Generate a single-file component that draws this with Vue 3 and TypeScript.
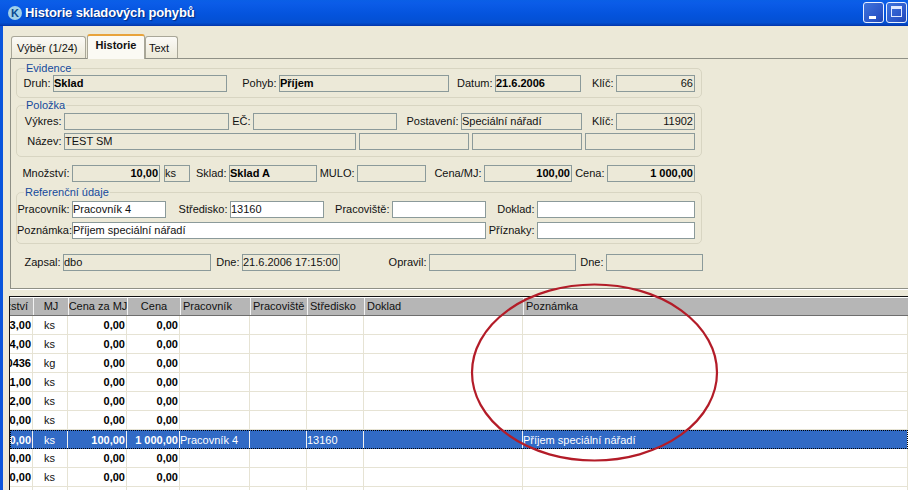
<script setup lang="ts">
type F = { l?: string; lw: number; w: number; v?: string; b?: boolean; r?: boolean };
const evidence: F[] = [
  { l: 'Druh:', lw: 36, w: 174, v: 'Sklad', b: true },
  { l: 'Pohyb:', lw: 52, w: 170, v: 'Příjem', b: true },
  { l: 'Datum:', lw: 46, w: 86, v: '21.6.2006', b: true },
  { l: 'Klíč:', lw: 35, w: 79, v: '66', r: true },
];
const pol1: F[] = [
  { l: 'Výkres:', lw: 47, w: 165 },
  { l: 'EČ:', lw: 24, w: 144 },
  { l: 'Postavení:', lw: 64, w: 121, v: 'Speciální nářadí' },
  { l: 'Klíč:', lw: 34, w: 79, v: '11902', r: true },
];
const pol2: F[] = [
  { l: 'Název:', lw: 47, w: 292, v: 'TEST SM' },
  { lw: 3, w: 110 },
  { lw: 3, w: 110 },
  { lw: 3, w: 110 },
];
const free: F[] = [
  { l: 'Množství:', lw: 55, w: 88, v: '10,00', b: true, r: true },
  { lw: 4, w: 26, v: 'ks' },
  { l: 'Sklad:', lw: 39, w: 88, v: 'Sklad A', b: true },
  { l: 'MULO:', lw: 40, w: 69 },
  { l: 'Cena/MJ:', lw: 58, w: 88, v: '100,00', b: true, r: true },
  { l: 'Cena:', lw: 35, w: 88, v: '1 000,00', b: true, r: true },
];
const ref1: F[] = [
  { l: 'Pracovník:', lw: 55, w: 94, v: 'Pracovník 4' },
  { l: 'Středisko:', lw: 64, w: 94, v: '13160' },
  { l: 'Pracoviště:', lw: 68, w: 94 },
  { l: 'Doklad:', lw: 51, w: 158 },
];
const ref2: F[] = [
  { l: 'Poznámka:', lw: 55, w: 414, v: 'Příjem speciální nářadí' },
  { l: 'Příznaky:', lw: 51, w: 158 },
];
const audit: F[] = [
  { l: 'Zapsal:', lw: 46, w: 148, v: 'dbo' },
  { l: 'Dne:', lw: 31, w: 98, v: '21.6.2006 17:15:00' },
  { l: 'Opravil:', lw: 89, w: 147 },
  { l: 'Dne:', lw: 30, w: 97 },
];
const headers = ['Množství', 'MJ', 'Cena za MJ', 'Cena', 'Pracovník', 'Pracoviště', 'Středisko', 'Doklad', 'Poznámka'];
const aligns = ['h-end', 'h-center', 'h-center', 'h-center', 'h-start', 'h-start', 'h-start', 'h-start', 'h-start'];
type R = { q: string; u: string; p?: string; c?: string; worker?: string; centre?: string; note?: string; sel?: boolean };
const rows: R[] = [
  { q: '13,00', u: 'ks' }, { q: '24,00', u: 'ks' }, { q: '0,0436', u: 'kg' }, { q: '11,00', u: 'ks' },
  { q: '12,00', u: 'ks' }, { q: '10,00', u: 'ks' },
  { q: '10,00', u: 'ks', p: '100,00', c: '1 000,00', worker: 'Pracovník 4', centre: '13160', note: 'Příjem speciální nářadí', sel: true },
  { q: '10,00', u: 'ks' }, { q: '10,00', u: 'ks' }, { q: '10,00', u: 'ks' },
];
</script>

<template>
  <div class="win">
    <header class="title">
      <span class="logo">K</span>
      <span class="title-text">Historie skladových pohybů</span>
      <span class="btn"><i class="min"></i></span>
      <span class="btn"><i class="max"></i></span>
    </header>
    <main class="body">
      <nav class="tabs">
        <span class="tab">Výběr (1/24)</span>
        <span class="tab active">Historie</span>
        <span class="tab">Text</span>
      </nav>
      <section class="panel">
        <div class="group g-ev">
          <span class="legend">Evidence</span>
          <div class="row">
            <template v-for="(f, i) in evidence" :key="i">
              <label class="lab" :style="{ width: f.lw + 'px' }">{{ f.l }}</label>
              <span class="box" :class="{ b: f.b, r: f.r }" :style="{ width: f.w + 'px' }">{{ f.v }}</span>
            </template>
          </div>
        </div>
        <div class="group g-pol">
          <span class="legend">Položka</span>
          <div class="row">
            <template v-for="(f, i) in pol1" :key="i">
              <label class="lab" :style="{ width: f.lw + 'px' }">{{ f.l }}</label>
              <span class="box" :class="{ r: f.r }" :style="{ width: f.w + 'px' }">{{ f.v }}</span>
            </template>
          </div>
          <div class="row gap3">
            <template v-for="(f, i) in pol2" :key="i">
              <label class="lab" :style="{ width: f.lw + 'px' }">{{ f.l }}</label>
              <span class="box" :style="{ width: f.w + 'px' }">{{ f.v }}</span>
            </template>
          </div>
        </div>
        <div class="row loose free">
          <template v-for="(f, i) in free" :key="i">
            <label class="lab" :style="{ width: f.lw + 'px' }">{{ f.l }}</label>
            <span class="box" :class="{ b: f.b, r: f.r }" :style="{ width: f.w + 'px' }">{{ f.v }}</span>
          </template>
        </div>
        <div class="group g-ref">
          <span class="legend leg-ref">Referenční údaje</span>
          <div class="row">
            <template v-for="(f, i) in ref1" :key="i">
              <label class="lab" :style="{ width: f.lw + 'px' }">{{ f.l }}</label>
              <span class="box white" :style="{ width: f.w + 'px' }">{{ f.v }}</span>
            </template>
          </div>
          <div class="row gap4">
            <template v-for="(f, i) in ref2" :key="i">
              <label class="lab" :style="{ width: f.lw + 'px' }">{{ f.l }}</label>
              <span class="box white" :style="{ width: f.w + 'px' }">{{ f.v }}</span>
            </template>
          </div>
        </div>
        <div class="row loose audit">
          <template v-for="(f, i) in audit" :key="i">
            <label class="lab" :style="{ width: f.lw + 'px' }">{{ f.l }}</label>
            <span class="box" :style="{ width: f.w + 'px' }">{{ f.v }}</span>
          </template>
        </div>
      </section>
      <section class="table">
        <div class="thead">
          <div v-for="(h, i) in headers" :key="h" class="th" :class="aligns[i]"><span>{{ h }}</span></div>
        </div>
        <div v-for="(r, i) in rows" :key="i" class="tr" :class="{ sel: r.sel }">
          <div class="td n end">{{ r.q }}</div>
          <div class="td center">{{ r.u }}</div>
          <div class="td n end">{{ r.p ?? '0,00' }}</div>
          <div class="td n end">{{ r.c ?? '0,00' }}</div>
          <div class="td">{{ r.worker }}</div>
          <div class="td"></div>
          <div class="td">{{ r.centre }}</div>
          <div class="td"></div>
          <div class="td">{{ r.note }}</div>
        </div>
      </section>
    </main>
    <svg class="ring" width="908" height="490" viewBox="0 0 908 490" aria-hidden="true">
      <ellipse cx="594.5" cy="372.5" rx="122.5" ry="88" fill="none" stroke="#b31c28" stroke-width="2.2" />
    </svg>
  </div>
</template>

<style scoped>
.win {
  position: relative;
  width: 908px;
  height: 490px;
  overflow: hidden;
  background: #ece9d8;
  font: 11px "Liberation Sans", Arial, sans-serif;
  color: #111;
}
.title {
  height: 26px;
  box-sizing: border-box;
  display: flex;
  align-items: center;
  padding: 0 1px 0 8px;
  background: linear-gradient(#0a5fe6 0, #0b5ce8 12%, #0453dc 60%, #0450d2 90%, #0340b8 100%);
  border-bottom: 1px solid #0338b0;
}
.logo {
  width: 14px;
  height: 14px;
  border-radius: 50%;
  background: #9fd0ea;
  color: #0a4a90;
  font: bold 11px/14px "Liberation Sans", sans-serif;
  text-align: center;
}
.title-text {
  margin-left: 3px;
  flex: 1;
  color: #fff;
  font: bold 13px "Liberation Sans", sans-serif;
  letter-spacing: -0.15px;
  text-shadow: 1px 1px 1px #022a80;
}
.btn {
  width: 21px;
  height: 21px;
  box-sizing: border-box;
  margin-left: 2px;
  border: 1px solid #e8f0ff;
  border-radius: 3px;
  background: linear-gradient(135deg, #3f74dc, #2a55c8 70%, #1f44b0);
  position: relative;
}
.min {
  position: absolute;
  left: 5px;
  top: 13px;
  width: 7px;
  height: 3px;
  background: #fff;
}
.max {
  position: absolute;
  left: 4px;
  top: 3px;
  width: 11px;
  height: 11px;
  box-sizing: border-box;
  border: 1px solid #dfe8ff;
  border-top-width: 3px;
}
.body {
  height: 464px;
  box-sizing: border-box;
  border-left: 3px solid #0a55dc;
  padding-left: 6px;
}
.tabs {
  height: 33px;
  display: flex;
  align-items: flex-end;
  padding-left: 2px;
  margin-bottom: -1px;
  position: relative;
  z-index: 1;
}
.tab {
  height: 22px;
  box-sizing: border-box;
  padding: 5px 3px 0 5px;
  margin-bottom: 1px;
  border: 1px solid #a9a798;
  border-bottom: none;
  border-radius: 3px 3px 0 0;
  background: linear-gradient(#fbfaf6, #ece9d8);
  margin-right: 1px;
  white-space: nowrap;
}
.tab:first-child { width: 75px; }
.tab:last-child { width: 33px; padding-left: 3px; }
.tab.active {
  width: 58px;
  height: 25px;
  margin: 0;
  padding: 3px 0 0;
  text-align: center;
  font-weight: bold;
  background: #fbfaf4;
  border-color: #a9a798;
  border-top: 2px solid #e8a33a;
}
.panel {
  height: 231px;
  box-sizing: border-box;
  margin-left: 1px;
  padding: 9px 0 0 5px;
  border: 1px solid #8f9086;
  border-right: none;
  background: #ece9d8;
  box-shadow: 0 1px 0 #fff;
}
.group {
  position: relative;
  width: 686px;
  box-sizing: border-box;
  border: 1px solid #d8d5c2;
  border-radius: 5px;
}
.g-ev { height: 30px; padding-top: 6px; }
.g-pol { height: 52px; padding-top: 7px; margin-top: 7px; }
.g-ref { height: 52px; padding-top: 8px; margin-top: 10px; }
.legend {
  position: absolute;
  left: 8px;
  top: -7px;
  padding: 0 1px;
  background: #ece9d8;
  color: #15499c;
  line-height: 12px;
}
.leg-ref { left: 7px; }
.row {
  display: flex;
  height: 17px;
  align-items: stretch;
}
.gap3 { margin-top: 3px; }
.gap4 { margin-top: 4px; }
.loose { margin-left: 1px; }
.free { margin-top: 8px; }
.audit { margin-top: 10px; }
.lab {
  flex: none;
  box-sizing: border-box;
  padding-right: 2.5px;
  text-align: right;
  line-height: 16px;
  white-space: nowrap;
}
.box {
  flex: none;
  box-sizing: border-box;
  border: 1px solid #8b9a9a;
  background: #ece9d8;
  padding: 0 1px 0 0;
  line-height: 15px;
  white-space: nowrap;
  overflow: hidden;
}
.box.white { background: #fff; }
.box.b { font: bold 11px/15px "Liberation Sans", sans-serif; color: #000; }
.box.r { text-align: right; }
.table {
  margin-top: 7px;
  height: 200px;
  border-top: 1px solid #111;
  border-left: 1px solid #111;
  background: #fff;
  padding-top: 1px;
  overflow: hidden;
}
.thead, .tr {
  display: grid;
  grid-template-columns: 23px 35px 59px 53px 70px 57px 57px 159px 1fr;
}
.thead {
  height: 17px;
  background: #b6b6b6;
  border-bottom: 1px solid #6e6e6e;
}
.th {
  box-sizing: border-box;
  display: flex;
  overflow: hidden;
  border-left: 1px solid #f2f2f2;
  line-height: 17px;
  white-space: nowrap;
  padding: 0 2px;
}
.th:first-child { border-left: none; padding-right: 5px; }
.h-end { justify-content: flex-end; }
.h-center { justify-content: center; }
.h-start { justify-content: flex-start; }
.tr {
  height: 19px;
  box-sizing: border-box;
  border-bottom: 1px solid #e6e3d4;
}
.td {
  box-sizing: border-box;
  display: flex;
  align-items: center;
  overflow: hidden;
  white-space: nowrap;
  border-right: 1px solid #e6e3d4;
  padding: 0 1px 0 0;
}
.td.end { justify-content: flex-end; }
.td.center { justify-content: center; }
.td.n { font: bold 11px "Liberation Sans", sans-serif; color: #000; }
.tr.sel {
  background: #316ac5;
  color: #fff;
  border-top: 1px dotted #fff;
  border-bottom: 1px dotted #fff;
  outline: 1px dotted #000;
  outline-offset: -1px;
}
.tr.sel .td { border-right-color: #f0f0f0; }
.tr.sel .td.n { color: #fff; }
.ring {
  position: absolute;
  left: 0;
  top: 0;
  pointer-events: none;
}
</style>
